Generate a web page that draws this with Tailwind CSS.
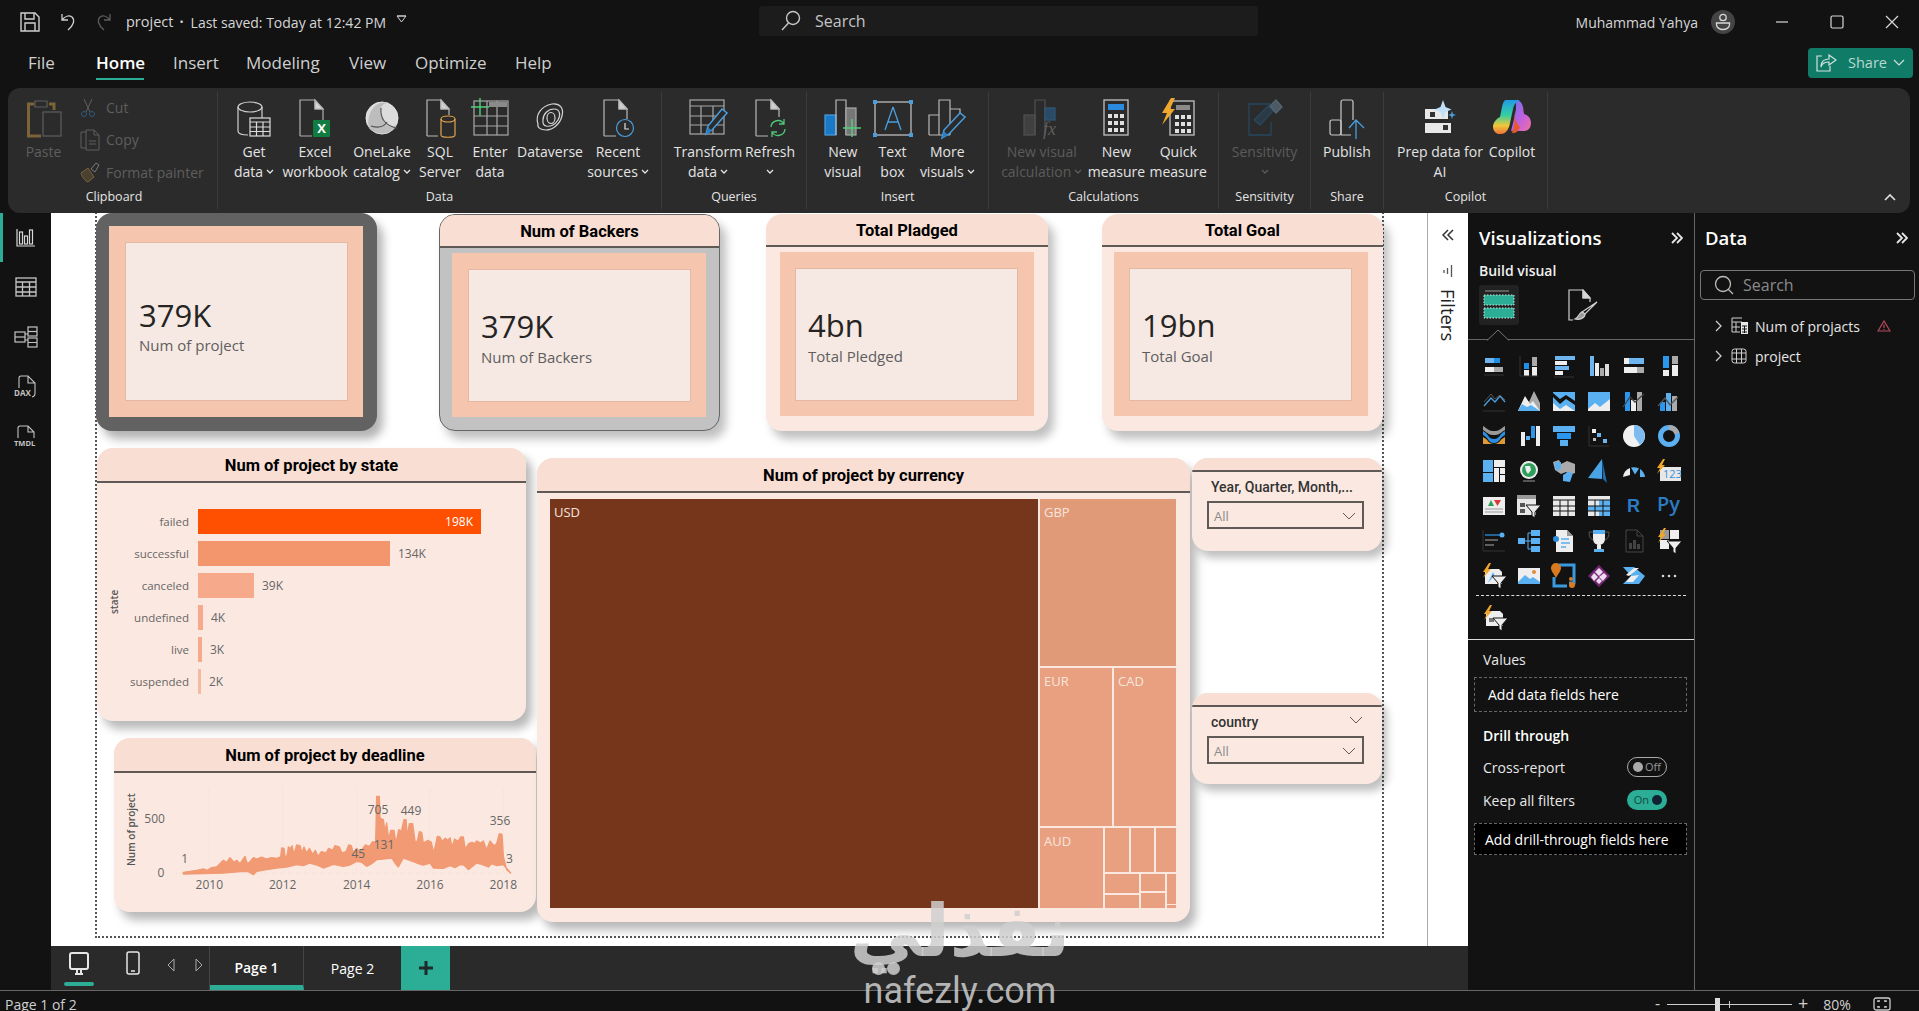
<!DOCTYPE html>
<html lang="en">
<head>
<meta charset="utf-8">
<title>project - Power BI</title>
<script src="https://cdn.jsdelivr.net/npm/@tailwindcss/browser@4"></script>
</head>
<body class="w-[1919px] h-[1011px] overflow-hidden flex flex-col bg-[#121212] text-[#e6e6e6] font-['Open_Sans',sans-serif] relative">

<!-- title bar -->
<div class="h-[44px] flex items-center shrink-0">
  <div class="w-[759px] flex items-center pl-[20px]">
    <svg width="20" height="20" viewBox="0 0 20 20" fill="none" stroke="#cfcfcf" stroke-width="1.4"><path d="M1 1h14l4 4v14H1zM5 1v6h9V1M5 19v-8h10v8"/></svg>
    <svg class="ml-[19px]" width="20" height="20" viewBox="0 0 20 20" fill="none" stroke="#cfcfcf" stroke-width="1.3"><path d="M3 2v6h6M3 8c3-4 7-5 10-3 3 3 2 8-4 13"/></svg>
    <svg class="ml-[14px]" width="20" height="20" viewBox="0 0 20 20" fill="none" stroke="#5c5c5c" stroke-width="1.3"><path d="M17 2v6h-6M17 8c-3-4-7-5-10-3-3 3-2 8 4 13"/></svg>
    <span class="ml-[13px] text-[14.5px] text-[#d6d6d6]">project</span>
    <span class="ml-[6px] text-[11px] text-[#d6d6d6]">•</span>
    <span class="ml-[7px] text-[14px] text-[#d6d6d6]">Last saved: Today at 12:42 PM</span>
    <svg class="ml-[10px] -mt-[6px]" width="11" height="8" viewBox="0 0 11 8" fill="none" stroke="#cfcfcf"><path d="M1 1h9L5.500 7zM1 1h9"/></svg>
  </div>
  <div class="w-[499px] h-[30px] bg-[#1c1c1c] rounded-[3px] flex items-center pl-[21px] -mt-[2px]">
    <svg width="22" height="22" viewBox="0 0 22 22" fill="none" stroke="#c8c8c8" stroke-width="1.4"><circle cx="13" cy="8" r="6.500"/><path d="M8.500 13 2 20"/></svg>
    <span class="ml-[13px] text-[16px] text-[#c4c4c4]">Search</span>
  </div>
  <div class="flex-1 flex items-center justify-end">
    <span class="text-[14px] text-[#d6d6d6]">Muhammad Yahya</span>
    <div class="ml-[13px] mr-[19px] w-[24px] h-[24px] rounded-full bg-[#444] flex items-center justify-center">
      <svg width="18" height="18" viewBox="0 0 18 18" fill="none" stroke="#d8d8d8" stroke-width="1.3"><circle cx="9" cy="4.500" r="3.200"/><path d="M2.500 10h13v1.500c0 3-3 5-6.500 5s-6.500-2-6.500-5z"/></svg>
    </div>
    <div class="w-[55px] flex justify-center"><svg width="14" height="14" viewBox="0 0 14 14" stroke="#d8d8d8" stroke-width="1.200"><path d="M1 7h12"/></svg></div>
    <div class="w-[55px] flex justify-center"><svg width="14" height="14" viewBox="0 0 14 14" fill="none" stroke="#d8d8d8" stroke-width="1.200"><rect x="1" y="1" width="12" height="12" rx="1.500"/></svg></div>
    <div class="w-[55px] flex justify-center"><svg width="14" height="14" viewBox="0 0 14 14" stroke="#d8d8d8" stroke-width="1.200"><path d="m1 1 12 12M13 1 1 13"/></svg></div>
  </div>
</div>

<!-- menu row -->
<div class="h-[44px] shrink-0 flex items-start relative text-[17px] text-[#cfcfcf] pl-[28px]">
  <span class="mt-[6px] w-[68px]">File</span>
  <span class="mt-[6px] w-[77px] font-semibold text-white">Home</span>
  <span class="mt-[6px] w-[73px]">Insert</span>
  <span class="mt-[6px] w-[103px]">Modeling</span>
  <span class="mt-[6px] w-[66px]">View</span>
  <span class="mt-[6px] w-[100px]">Optimize</span>
  <span class="mt-[6px]">Help</span>
  <div class="absolute left-[96px] top-[34px] w-[48px] h-[2px] bg-[#2bad96]"></div>
  <div class="absolute left-[1808px] top-[4px] w-[105px] h-[30px] rounded-[4px] bg-[#107c67] flex items-center pl-[8px] text-[14.5px] text-[#bcd8d2]">
    <svg width="21" height="20" viewBox="0 0 21 20" fill="none" stroke="#cfe2dd" stroke-width="1.200"><path d="M6 3H1v15h13v-5M13 2l7 5-7 5V9C9 9 6 10 5 14c0-6 4-8 8-8z"/></svg>
    <span class="ml-[11px]">Share</span>
    <svg class="ml-[6px]" width="12" height="8" viewBox="0 0 12 8" fill="none" stroke="#cfe2dd" stroke-width="1.200"><path d="m1 1 5 5 5-5"/></svg>
  </div>
</div>

<!-- ribbon -->
<div class="mx-[8px] w-[1902px] h-[125px] shrink-0 rounded-[12px] bg-[#2b2b2b] flex items-stretch py-[4px] pl-[1px] text-[14px] leading-[20px] text-[#e4e4e4] relative">

  <!-- Clipboard -->
  <div class="w-[209px] flex flex-col border-r border-[#3c3c3c]">
    <div class="flex-1 flex text-[#5e5e5e]">
      <div class="w-[71px] flex flex-col items-center pt-[6px]">
        <svg width="36" height="44" viewBox="0 0 36 44" fill="none" stroke-width="3"><path d="M7 6H1.500v32H14" stroke="#7d6436"/><path d="M22 6h5v6" stroke="#7d6436"/><path d="M8 3h12v6H8z" stroke="#5e5e5e" stroke-width="1.200"/><rect x="16" y="14" width="18" height="24" stroke="#5e5e5e" stroke-width="1.200"/></svg>
        <span class="-ml-[2px]">Paste</span>
      </div>
      <div class="flex flex-col gap-[12px] pt-[6px]">
        <div class="flex items-center h-[20px]"><svg width="16" height="20" viewBox="0 0 16 20" fill="none" stroke="#5e5e5e"><path d="m4 1 6 13M12 1 6 14"/><circle cx="4" cy="16" r="2.500" stroke="#2c5a7c"/><circle cx="12" cy="16" r="2.500" stroke="#2c5a7c"/></svg><span class="ml-[10px]">Cut</span></div>
        <div class="flex items-center h-[20px]"><svg width="20" height="22" viewBox="0 0 20 22" fill="none" stroke="#5e5e5e"><path d="M6 3H1v16h5M6 1h8l5 5v15H6zM14 1v5h5M9 12h7M9 15h7"/></svg><span class="ml-[6px]">Copy</span></div>
        <div class="flex items-center h-[20px] mt-[1px]"><svg width="20" height="22" viewBox="0 0 20 22" fill="none"><path d="m1 11 7-5 6 9-6 5c-3-1-6-5-7-9z" stroke="#7a6338" fill="#4a4030"/><path d="m11 7 5-6 3 2-4 7z" stroke="#7a7a7a"/></svg><span class="ml-[6px]">Format painter</span></div>
      </div>
    </div>
    <div class="text-center text-[12.5px] leading-[16px] pb-[4px] text-[#e4e4e4] pl-[2px]">Clipboard</div>
  </div>

  <!-- Data -->
  <div class="w-[444px] flex flex-col border-r border-[#3c3c3c]">
    <div class="flex-1 flex">
      <div class="w-[72px] flex flex-col items-center whitespace-nowrap pt-[6px]">
        <svg width="38" height="44" viewBox="0 0 38 44" fill="none" stroke="#cfcfcf" stroke-width="1.200"><ellipse cx="15" cy="9" rx="12" ry="5"/><path d="M3 9v24c0 3 5 4 10 4M27 9v11"/><rect x="15" y="20" width="20" height="18" stroke="#dcdcdc"/><path d="M15 24h20M15 29h20M15 33.500h20M21.500 24v14M28 24v14" stroke="#dcdcdc"/></svg>
        <span>Get</span><span class="flex items-center">data<svg class="ml-[3px]" width="8" height="6" viewBox="0 0 8 6" fill="none" stroke="#e4e4e4" stroke-width="1.300"><path d="m1 1 3 3 3-3"/></svg></span>
      </div>
      <div class="w-[50px] flex flex-col items-center whitespace-nowrap pt-[6px]">
        <svg width="36" height="44" viewBox="0 0 36 44" fill="none" stroke="#b0b0b0" stroke-width="1.200"><path d="M3 38V2h15l8 9v12M18 2v9h8M3 38h12"/><path d="M18 2v9h8z" fill="#d8d8d8"/><rect x="16" y="22" width="17" height="17" rx="1" fill="#107c41" stroke="none"/><text x="24.500" y="35" fill="#fff" text-anchor="middle" font-size="13" font-weight="700" stroke="none" font-family="Open Sans">X</text></svg>
        <span>Excel</span><span>workbook</span>
      </div>
      <div class="w-[84px] flex flex-col items-center whitespace-nowrap pt-[6px]">
        <svg width="38" height="44" viewBox="0 0 38 44" fill="none"><circle cx="19" cy="20" r="16" fill="#dcdcdc" stroke="#e8e8e8"/><path d="M6 30C14 38 28 38 34 26 28 32 22 28 18 18 16 12 18 6 24 5 12 2 3 16 6 30z" fill="#bdbdbd"/><path d="M18 10c-1 10 4 18 16 20M8 28c6 2 12 2 16-4" stroke="#555" stroke-width="1.200"/></svg>
        <span>OneLake</span><span class="flex items-center">catalog<svg class="ml-[3px]" width="8" height="6" viewBox="0 0 8 6" fill="none" stroke="#e4e4e4" stroke-width="1.300"><path d="m1 1 3 3 3-3"/></svg></span>
      </div>
      <div class="w-[32px] flex flex-col items-center whitespace-nowrap pt-[6px]">
        <svg width="36" height="44" viewBox="0 0 36 44" fill="none" stroke="#b8b8b8" stroke-width="1.200"><path d="M5 38V2h14l8 9v6M19 2v9h8M5 38h11"/><path d="M19 2v9h8z" fill="#cfcfcf"/><ellipse cx="26" cy="21" rx="7" ry="3" stroke="#e0a34c"/><path d="M19 21v16c0 3 14 3 14 0V21" stroke="#e0a34c"/></svg>
        <span>SQL</span><span>Server</span>
      </div>
      <div class="w-[68px] flex flex-col items-center whitespace-nowrap pt-[6px]">
        <svg width="38" height="44" viewBox="0 0 38 44" fill="none" stroke="#a8a8a8" stroke-width="1.200"><rect x="3" y="3" width="34" height="34"/><path d="M16 3v34M26 3v34M3 18h34M3 28h34"/><rect x="18" y="4" width="18" height="5" fill="#8a8a8a" stroke="none"/><path d="M9 0v18M0 9h18" stroke="#4fd07a" stroke-width="1.400"/></svg>
        <span>Enter</span><span>data</span>
      </div>
      <div class="w-[52px] flex flex-col items-center whitespace-nowrap pt-[6px]">
        <svg width="38" height="44" viewBox="0 0 38 44" fill="none" stroke="#d4d4d4" stroke-width="1.200"><path d="M7 26c-3-9 3-18 14-20 8-1 12 4 10 12-2 8-9 14-16 14-6 0-9-3-8-6z"/><path d="M12 22c0-6 5-11 11-11s7 6 4 11-8 7-12 6-3-4-3-6z"/><ellipse cx="20" cy="20" rx="4" ry="5.500"/></svg>
        <span>Dataverse</span>
      </div>
      <div class="w-[84px] flex flex-col items-center whitespace-nowrap pt-[6px]">
        <svg width="36" height="44" viewBox="0 0 36 44" fill="none" stroke="#b8b8b8" stroke-width="1.200"><path d="M4 38V2h15l8 9v10M19 2v9h8M4 38h12"/><path d="M19 2v9h8z" fill="#cfcfcf"/><circle cx="25" cy="30" r="8.500" stroke="#4a9ede"/><path d="M25 25v6h4" stroke="#e0e0e0"/></svg>
        <span>Recent</span><span class="flex items-center">sources<svg class="ml-[3px]" width="8" height="6" viewBox="0 0 8 6" fill="none" stroke="#e4e4e4" stroke-width="1.300"><path d="m1 1 3 3 3-3"/></svg></span>
      </div>
    </div>
    <div class="text-center text-[12.5px] leading-[16px] pb-[4px]">Data</div>
  </div>

  <!-- Queries -->
  <div class="w-[145px] flex flex-col border-r border-[#3c3c3c]">
    <div class="flex-1 flex">
      <div class="w-[92px] flex flex-col items-center whitespace-nowrap pt-[6px]">
        <svg width="40" height="44" viewBox="0 0 40 44" fill="none" stroke="#a8a8a8" stroke-width="1.200"><rect x="2" y="2" width="34" height="34"/><path d="M2 8h34M2 18h34M2 27h34M13 8v28M25 8v28"/><path d="m22 38 2-8 14-17 5 4-15 17z" transform="translate(-4 -2)" fill="#2b2b2b" stroke="#4a9ede" stroke-width="1.500"/><path d="m18 36 2-7 4 4z" fill="#2a7fc4" stroke="none"/></svg>
        <span>Transform</span><span class="flex items-center">data<svg class="ml-[3px]" width="8" height="6" viewBox="0 0 8 6" fill="none" stroke="#e4e4e4" stroke-width="1.300"><path d="m1 1 3 3 3-3"/></svg></span>
      </div>
      <div class="w-[32px] flex flex-col items-center whitespace-nowrap pt-[6px]">
        <svg width="36" height="44" viewBox="0 0 36 44" fill="none" stroke="#b8b8b8" stroke-width="1.200"><path d="M4 38V2h15l8 9v8M19 2v9h8M4 38h12"/><path d="M19 2v9h8z" fill="#cfcfcf"/><path d="M19 29a7 7 0 0 1 13-3M33 31a7 7 0 0 1-13 3M32 21v5h-5M20 39v-5h5" stroke="#4fc878" stroke-width="1.300"/></svg>
        <span>Refresh</span><svg class="mt-[7px]" width="8" height="6" viewBox="0 0 8 6" fill="none" stroke="#e4e4e4" stroke-width="1.300"><path d="m1 1 3 3 3-3"/></svg>
      </div>
    </div>
    <div class="text-center text-[12.5px] leading-[16px] pb-[4px]">Queries</div>
  </div>

  <!-- Insert -->
  <div class="w-[182px] flex flex-col border-r border-[#3c3c3c]">
    <div class="flex-1 flex">
      <div class="w-[72px] flex flex-col items-center whitespace-nowrap pt-[6px]">
        <svg width="38" height="44" viewBox="0 0 38 44" fill="none" stroke="#b8b8b8" stroke-width="1.200"><rect x="1" y="17" width="11" height="20" fill="#1a78c8" stroke="#4a9ede"/><path d="M12 37V2h10v35"/><rect x="22" y="10" width="10" height="27" fill="#777" stroke="#a8a8a8"/><path d="M28 21v18M19 30h18" stroke="#4fd07a" stroke-width="1.400"/></svg>
        <span>New</span><span>visual</span>
      </div>
      <div class="w-[28px] flex flex-col items-center whitespace-nowrap pt-[6px]">
        <svg width="40" height="44" viewBox="0 0 40 44" fill="none"><rect x="2" y="4" width="36" height="33" stroke="#c8c8c8" stroke-width="1.200"/><path d="m20 9-8 23M20 9l8 23M15 24h10" stroke="#4a9ede" stroke-width="1.300"/><g fill="#4a9ede"><rect x="0" y="2" width="4" height="4"/><rect x="36" y="2" width="4" height="4"/><rect x="0" y="35" width="4" height="4"/><rect x="36" y="35" width="4" height="4"/></g></svg>
        <span>Text</span><span>box</span>
      </div>
      <div class="w-[82px] flex flex-col items-center whitespace-nowrap pt-[6px]">
        <svg width="38" height="44" viewBox="0 0 38 44" fill="none" stroke="#b8b8b8" stroke-width="1.200"><path d="M1 37V17h10M11 37V2h11v35M22 11h10v8M1 37h21"/><path d="m14 40 2-8 16-17 5 4-16 17z" fill="#2b2b2b" stroke="#4a9ede" stroke-width="1.500"/><path d="m14 40 2-7 4 4z" fill="#2a7fc4" stroke="none"/></svg>
        <span>More</span><span class="flex items-center">visuals<svg class="ml-[3px]" width="8" height="6" viewBox="0 0 8 6" fill="none" stroke="#e4e4e4" stroke-width="1.300"><path d="m1 1 3 3 3-3"/></svg></span>
      </div>
    </div>
    <div class="text-center text-[12.5px] leading-[16px] pb-[4px]">Insert</div>
  </div>

  <!-- Calculations -->
  <div class="w-[230px] flex flex-col border-r border-[#3c3c3c]">
    <div class="flex-1 flex">
      <div class="w-[106px] flex flex-col items-center whitespace-nowrap pt-[6px] text-[#5c5c5c]">
        <svg width="38" height="44" viewBox="0 0 38 44" fill="none" stroke="#505050" stroke-width="1.200"><rect x="1" y="17" width="11" height="20" fill="#404040"/><path d="M12 37V2h10v35"/><rect x="22" y="10" width="10" height="12" fill="#2a4a66" stroke="#2f5878"/><text x="20" y="37" fill="#5e5e5e" stroke="none" font-size="18" font-style="italic" font-family="Liberation Serif">fx</text></svg>
        <span>New visual</span><span class="flex items-center">calculation<svg class="ml-[3px]" width="8" height="6" viewBox="0 0 8 6" fill="none" stroke="#5c5c5c" stroke-width="1.300"><path d="m1 1 3 3 3-3"/></svg></span>
      </div>
      <div class="w-[44px] flex flex-col items-center whitespace-nowrap pt-[6px]">
        <svg width="28" height="44" viewBox="0 0 28 44" fill="none" stroke="#b8b8b8" stroke-width="1.400"><rect x="2" y="2" width="24" height="35"/><rect x="6" y="6" width="16" height="6" fill="#2a8ae0" stroke="none"/><g fill="#e0e0e0" stroke="none"><rect x="6" y="16" width="4" height="4"/><rect x="12" y="16" width="4" height="4"/><rect x="18" y="16" width="4" height="4"/><rect x="6" y="23" width="4" height="4"/><rect x="12" y="23" width="4" height="4"/><rect x="18" y="23" width="4" height="4"/><rect x="6" y="30" width="4" height="4"/><rect x="12" y="30" width="4" height="4"/><rect x="18" y="30" width="4" height="4"/></g></svg>
        <span>New</span><span>measure</span>
      </div>
      <div class="w-[80px] flex flex-col items-center whitespace-nowrap pt-[6px]">
        <svg width="34" height="44" viewBox="0 0 34 44" fill="none" stroke="#b8b8b8" stroke-width="1.400"><rect x="9" y="3" width="24" height="34"/><rect x="15" y="7" width="14" height="5" fill="#8a8a8a" stroke="none"/><g fill="#e0e0e0" stroke="none"><rect x="14" y="17" width="4" height="4"/><rect x="20" y="17" width="4" height="4"/><rect x="26" y="17" width="4" height="4"/><rect x="14" y="24" width="4" height="4"/><rect x="20" y="24" width="4" height="4"/><rect x="26" y="24" width="4" height="4"/><rect x="14" y="31" width="4" height="4"/><rect x="20" y="31" width="4" height="4"/><rect x="26" y="31" width="4" height="4"/></g><path d="M10 0 1 15h5L1 27l13-16H9l5-11z" fill="#f0a82c" stroke="none"/></svg>
        <span>Quick</span><span>measure</span>
      </div>
    </div>
    <div class="text-center text-[12.5px] leading-[16px] pb-[4px]">Calculations</div>
  </div>

  <!-- Sensitivity -->
  <div class="w-[92px] flex flex-col border-r border-[#3c3c3c]">
    <div class="flex-1 flex flex-col items-center pt-[6px] text-[#5c5c5c] whitespace-nowrap">
      <svg width="38" height="44" viewBox="0 0 38 44" fill="none" stroke="#27485f" stroke-width="1.300"><path d="M24 6H3v31h22V24"/><path d="m8 22 14-14 5 5-13 14z" fill="#2b3a44"/><path d="m24 8 6-6 6 7-6 6z" fill="#4a5964" stroke="#566670"/></svg>
      <span>Sensitivity</span><svg class="mt-[7px]" width="8" height="6" viewBox="0 0 8 6" fill="none" stroke="#5c5c5c" stroke-width="1.300"><path d="m1 1 3 3 3-3"/></svg>
    </div>
    <div class="text-center text-[12.5px] leading-[16px] pb-[4px]">Sensitivity</div>
  </div>

  <!-- Share -->
  <div class="w-[73px] flex flex-col border-r border-[#3c3c3c]">
    <div class="flex-1 flex flex-col items-center pt-[6px]">
      <svg width="36" height="44" viewBox="0 0 36 44" fill="none" stroke="#c8c8c8" stroke-width="1.200"><rect x="1" y="22" width="11" height="15" rx="2"/><path d="M12 37V4a2 2 0 0 1 2-2h8a2 2 0 0 1 2 2v18M12 37h10"/><path d="M27 41V23M20 30l7-8 8 8" stroke="#4a9ede" stroke-width="1.300"/></svg>
      <span>Publish</span>
    </div>
    <div class="text-center text-[12.5px] leading-[16px] pb-[4px]">Share</div>
  </div>

  <!-- Copilot -->
  <div class="w-[164px] flex flex-col border-r border-[#3c3c3c]">
    <div class="flex-1 flex">
      <div class="w-[112px] flex flex-col items-center whitespace-nowrap pt-[6px]">
        <svg width="34" height="44" viewBox="0 0 34 44" fill="none"><rect x="2" y="11" width="23" height="10" fill="#e8e8e8"/><rect x="7" y="14" width="5" height="5" fill="#333"/><rect x="2" y="25" width="26" height="10" fill="#e8e8e8"/><rect x="20" y="27" width="5" height="5" fill="#333"/><path d="M20 3l2.500 7 6 2.500-6 2.500-2.500 7-2.500-7-6-2.500 6-2.500z" fill="#bfe0f8" transform="translate(0 -1)"/><path d="m29 13 1 3 3 1-3 1-1 3-1-3-3-1 3-1z" fill="#4a9ede"/></svg>
        <span>Prep data for</span><span>AI</span>
      </div>
      <div class="w-[32px] flex flex-col items-center whitespace-nowrap pt-[6px]">
        <svg width="40" height="44" viewBox="0 0 40 44" fill="none"><defs><linearGradient id="cpa" x1="0" y1="0" x2="0" y2="1"><stop offset="0" stop-color="#1f9be8"/><stop offset=".45" stop-color="#35cfa0"/><stop offset=".75" stop-color="#f0c838"/><stop offset="1" stop-color="#f0703a"/></linearGradient><linearGradient id="cpb" x1="0" y1="0" x2="1" y2="1"><stop offset="0" stop-color="#5f78f0"/><stop offset=".55" stop-color="#c060e0"/><stop offset="1" stop-color="#f070a0"/></linearGradient></defs><path d="M24 2c4 0 6 3 7 7l1 7c4 1 7 4 7 9 0 5-3 8-7 8H19l3-12 2-10c0-4 0-7 0-9z" fill="url(#cpb)"/><path d="M14 2h14c-3 1-6 4-7 9l-3 14c-1 6-4 11-9 11H6c-3-1-5-4-5-7 0-4 3-8 7-10l2-10c1-4 2-7 4-7z" fill="url(#cpa)"/><path d="M22 14c1 8 1 14-2 21 5 0 6-2 8-6-4-4-5-9-6-15z" fill="#e8582a"/></svg>
        <span>Copilot</span>
      </div>
    </div>
    <div class="text-center text-[12.5px] leading-[16px] pb-[4px]">Copilot</div>
  </div>

  <svg class="absolute right-[14px] bottom-[12px]" width="12" height="8" viewBox="0 0 12 8" fill="none" stroke="#e0e0e0" stroke-width="1.600"><path d="m1 7 5-5 5 5"/></svg>
</div>

<!-- main -->
<div class="flex-1 flex min-h-0">

  <!-- left rail -->
  <div class="w-[51px] shrink-0 flex flex-col relative">
    <div class="absolute left-0 top-0 w-[3px] h-[49px] bg-[#2bad96]"></div>
    <div class="h-[49px] flex items-center justify-center"><svg width="20" height="20" viewBox="0 0 20 20" fill="none" stroke="#d8d8d8" stroke-width="1.200"><path d="M1 1v17h18"/><rect x="3.500" y="4" width="3" height="12"/><rect x="8.500" y="8" width="3" height="8"/><rect x="13.500" y="2" width="3" height="14"/></svg></div>
    <div class="h-[50px] flex items-center justify-center"><svg width="22" height="20" viewBox="0 0 22 20" fill="none" stroke="#c4c4c4" stroke-width="1.300"><rect x="1" y="1" width="20" height="18"/><path d="M1 5h20M1 10h20M1 15h20M7.500 5v14M14.500 5v14"/></svg></div>
    <div class="h-[50px] flex items-center justify-center"><svg width="24" height="22" viewBox="0 0 24 22" fill="none" stroke="#c4c4c4" stroke-width="1.200"><rect x="1" y="6" width="10" height="10"/><path d="M1 11h10"/><rect x="14" y="1" width="9" height="9"/><path d="M14 5.500h9"/><rect x="14" y="12" width="9" height="9"/><path d="M14 16.500h9M11 8h3M11 14h3"/></svg></div>
    <div class="h-[50px] flex items-center justify-center"><svg width="24" height="24" viewBox="0 0 24 24" fill="none" stroke="#c4c4c4" stroke-width="1.100"><path d="M5 13V3a2 2 0 0 1 2-2h7l7 7v10M14 1v7h7M21 18a4 4 0 0 1-3 4"/><text x="0" y="21" fill="#c4c4c4" stroke="none" font-size="8" font-weight="700" font-family="Open Sans">DAX</text></svg></div>
    <div class="h-[50px] flex items-center justify-center"><svg width="24" height="24" viewBox="0 0 24 24" fill="none" stroke="#c4c4c4" stroke-width="1.100"><path d="M4 13V3a2 2 0 0 1 2-2h8l6 6v6M14 1v6h6"/><text x="0" y="21" fill="#c4c4c4" stroke="none" font-size="7.500" font-weight="700" font-family="Open Sans">TMDL</text></svg></div>
  </div>

  <div class="w-[1417px] shrink-0 flex flex-col">
    <div class="flex-1 flex min-h-0">
      <!-- canvas -->
      <div class="w-[1376px] bg-white relative overflow-hidden">
        <div class="absolute left-[44px] top-[-4px] w-[1289px] h-[729px] border-2 border-dotted border-[#555]"></div>

        <!-- card 1 -->
        <div class="absolute left-[45px] top-0 w-[281px] h-[218px] rounded-[16px] bg-[#636262] shadow-[6px_8px_10px_rgba(0,0,0,0.3)] pt-[13px] pl-[13px]">
          <div class="w-[254px] h-[191px] bg-[#f5c5ae] pt-[16px] pl-[16px]">
            <div class="w-[223px] h-[159px] bg-[#f6e9e4] border border-[#e4b8a4] flex flex-col justify-center pl-[13px] pt-[7px]">
              <div class="text-[31px] leading-[38px] text-[#252423]">379K</div>
              <div class="text-[15px] leading-[20px] mt-[1px] text-[#605e5c]">Num of project</div>
            </div>
          </div>
        </div>
        <!-- card 2 -->
        <div class="absolute left-[388px] top-[1px] w-[281px] h-[217px] rounded-[16px] bg-[#c2c2c2] border border-[#666] shadow-[6px_8px_10px_rgba(0,0,0,0.25)] overflow-hidden">
          <div class="h-[33px] bg-[#f9ded3] border-b-2 border-[#5f5a55] text-center font-['Roboto',sans-serif] font-bold text-[16.5px] leading-[33px] text-black">Num of Backers</div>
          <div class="ml-[12px] mt-[5px] w-[254px] h-[164px] bg-[#f5c5ae] pt-[16px] pl-[16px]">
            <div class="w-[223px] h-[133px] bg-[#f6e9e4] border border-[#e4b8a4] flex flex-col justify-center pl-[12px] pt-[3px]">
              <div class="text-[31px] leading-[38px] text-[#252423]">379K</div>
              <div class="text-[15px] leading-[20px] mt-[2px] text-[#605e5c]">Num of Backers</div>
            </div>
          </div>
        </div>
        <!-- card 3 -->
        <div class="absolute left-[715px] top-[1px] w-[282px] h-[217px] rounded-[16px] bg-[#fbe9e1] shadow-[6px_8px_10px_rgba(0,0,0,0.25)] overflow-hidden">
          <div class="h-[33px] bg-[#f9ded3] border-b-2 border-[#5f5a55] text-center font-['Roboto',sans-serif] font-bold text-[16.5px] leading-[33px] text-black">Total Pladged</div>
          <div class="ml-[14px] mt-[5px] w-[254px] h-[164px] bg-[#f5c5ae] pt-[16px] pl-[15px]">
            <div class="w-[223px] h-[133px] bg-[#f6e9e4] border border-[#e4b8a4] flex flex-col justify-center pl-[12px] pt-[3px]">
              <div class="text-[31px] leading-[38px] text-[#252423]">4bn</div>
              <div class="text-[15px] leading-[20px] mt-[2px] text-[#605e5c]">Total Pledged</div>
            </div>
          </div>
        </div>
        <!-- card 4 -->
        <div class="absolute left-[1051px] top-[1px] w-[281px] h-[217px] rounded-[16px] bg-[#fbe9e1] shadow-[6px_8px_10px_rgba(0,0,0,0.25)] overflow-hidden">
          <div class="h-[33px] bg-[#f9ded3] border-b-2 border-[#5f5a55] text-center font-['Roboto',sans-serif] font-bold text-[16.5px] leading-[33px] text-black">Total Goal</div>
          <div class="ml-[12px] mt-[5px] w-[254px] h-[164px] bg-[#f5c5ae] pt-[16px] pl-[15px]">
            <div class="w-[223px] h-[133px] bg-[#f6e9e4] border border-[#e4b8a4] flex flex-col justify-center pl-[12px] pt-[3px]">
              <div class="text-[31px] leading-[38px] text-[#252423]">19bn</div>
              <div class="text-[15px] leading-[20px] mt-[2px] text-[#605e5c]">Total Goal</div>
            </div>
          </div>
        </div>

        <!-- state chart -->
        <div class="absolute left-[46px] top-[235px] w-[429px] h-[273px] rounded-[16px] bg-[#fbe9e1] shadow-[6px_8px_10px_rgba(0,0,0,0.28)] overflow-hidden">
          <div class="h-[35px] bg-[#f9ded3] border-b-2 border-[#5f5a55] text-center font-['Roboto',sans-serif] font-bold text-[16.5px] leading-[36px] text-black">Num of project by state</div>
          <div class="pt-[26px] flex flex-col gap-[7px] text-[12px] text-[#666]">
            <div class="flex items-center h-[25px]"><span class="w-[92px] text-right text-[11.5px]">failed</span><div class="ml-[9px] w-[283px] h-full bg-[#ff4f00] flex items-center justify-end pr-[8px] text-white">198K</div></div>
            <div class="flex items-center h-[25px]"><span class="w-[92px] text-right text-[11.5px]">successful</span><div class="ml-[9px] w-[192px] h-full bg-[#f4966d]"></div><span class="ml-[8px]">134K</span></div>
            <div class="flex items-center h-[25px]"><span class="w-[92px] text-right text-[11.5px]">canceled</span><div class="ml-[9px] w-[56px] h-full bg-[#f7aa8b]"></div><span class="ml-[8px]">39K</span></div>
            <div class="flex items-center h-[25px]"><span class="w-[92px] text-right text-[11.5px]">undefined</span><div class="ml-[9px] w-[5px] h-full bg-[#f7aa8b]"></div><span class="ml-[8px]">4K</span></div>
            <div class="flex items-center h-[25px]"><span class="w-[92px] text-right text-[11.5px]">live</span><div class="ml-[9px] w-[4px] h-full bg-[#f7aa8b]"></div><span class="ml-[8px]">3K</span></div>
            <div class="flex items-center h-[25px]"><span class="w-[92px] text-right text-[11.5px]">suspended</span><div class="ml-[9px] w-[3px] h-full bg-[#f7b9a0]"></div><span class="ml-[8px]">2K</span></div>
          </div>
          <div class="absolute left-[10px] top-[142px] w-[14px] h-[24px] [writing-mode:vertical-rl] rotate-180 text-[10px] leading-[14px] font-semibold text-[#555] flex items-center justify-center">state</div>
        </div>

        <!-- deadline chart -->
        <div class="absolute left-[63px] top-[525px] w-[422px] h-[174px] rounded-[16px] bg-[#fbe9e1] shadow-[6px_8px_10px_rgba(0,0,0,0.28)] overflow-hidden">
          <div class="h-[35px] bg-[#f9ded3] border-b-2 border-[#5f5a55] text-center font-['Roboto',sans-serif] font-bold text-[16.5px] leading-[36px] text-black">Num of project by deadline</div>
          <svg class="absolute left-0 top-0" width="422" height="174" viewBox="72 895 1266 522" font-family="Open Sans" font-size="36" fill="#666">
            <g stroke="#d8cfca" stroke-width="2" stroke-dasharray="2 6"><path d="M358 1045v255M578 1045v255M800 1045v255M1020 1045v255M1240 1045v255M250 1300h1010"/></g>
            <path fill="#f19a73" stroke="#f19a73" stroke-width="4" stroke-linejoin="round" d="M280 1298 320 1292 340 1288 352 1292 365 1284 380 1282 392 1270 400 1262 410 1268 420 1254 432 1268 440 1262 450 1272 465 1250 472 1272 480 1266 490 1254 500 1258 515 1252 530 1258 545 1254 560 1256 572 1252 575 1225 582 1226 586 1256 592 1245 595 1222 603 1226 606 1218 612 1244 620 1216 630 1218 636 1240 642 1222 650 1240 658 1226 668 1244 676 1232 684 1250 694 1236 708 1240 716 1226 728 1232 735 1218 748 1222 756 1240 768 1236 776 1216 784 1218 790 1240 800 1226 810 1238 826 1216 838 1220 848 1206 857 1208 860 1070 868 1070 870 1135 880 1140 885 1175 890 1150 896 1200 902 1172 912 1172 918 1212 926 1170 934 1175 942 1140 948 1140 952 1190 958 1152 968 1152 975 1205 982 1205 988 1176 995 1178 1000 1210 1014 1202 1024 1208 1030 1238 1036 1220 1042 1190 1050 1192 1056 1205 1066 1196 1074 1202 1080 1194 1086 1222 1094 1198 1104 1205 1112 1192 1120 1192 1126 1228 1136 1212 1146 1208 1154 1212 1160 1204 1172 1210 1180 1204 1190 1230 1200 1204 1212 1218 1220 1212 1228 1182 1236 1184 1240 1250 1250 1290 1262 1300 1240 1275 1220 1278 1205 1272 1195 1282 1175 1274 1160 1270 1145 1282 1135 1290 1122 1276 1110 1275 1095 1284 1080 1278 1060 1286 1030 1285 1020 1270 1000 1276 980 1270 960 1262 940 1255 925 1282 915 1270 905 1255 880 1258 860 1260 845 1272 830 1280 815 1268 800 1265 780 1276 760 1280 730 1274 700 1285 680 1276 660 1270 640 1278 620 1275 590 1282 560 1285 530 1290 500 1295 490 1305 475 1296 460 1295 400 1300 280 1303Z"/>
            <text x="194" y="1151" text-anchor="middle">500</text>
            <text x="213" y="1313" text-anchor="middle">0</text>
            <text x="284" y="1271" text-anchor="middle">1</text>
            <text x="864" y="1124" text-anchor="middle">705</text>
            <text x="963" y="1127" text-anchor="middle">449</text>
            <text x="1230" y="1157" text-anchor="middle">356</text>
            <text x="1258" y="1271" text-anchor="middle">3</text>
            <text x="805" y="1256" text-anchor="middle">45</text>
            <text x="882" y="1229" text-anchor="middle">131</text>
            <text x="358" y="1349" text-anchor="middle">2010</text>
            <text x="578" y="1349" text-anchor="middle">2012</text>
            <text x="800" y="1349" text-anchor="middle">2014</text>
            <text x="1020" y="1349" text-anchor="middle">2016</text>
            <text x="1240" y="1349" text-anchor="middle">2018</text>
            <text x="0" y="0" text-anchor="middle" font-size="30" font-weight="600" fill="#555" transform="translate(134 1170) rotate(-90)">Num of project</text>
          </svg>
        </div>

        <!-- currency treemap -->
        <div class="absolute left-[486px] top-[245px] w-[653px] h-[464px] rounded-[16px] bg-[#fbe9e1] shadow-[6px_8px_10px_rgba(0,0,0,0.28)] overflow-hidden">
          <div class="h-[35px] bg-[#f9ded3] border-b-2 border-[#5f5a55] text-center font-['Roboto',sans-serif] font-bold text-[16.5px] leading-[36px] text-black">Num of project by currency</div>
          <div class="ml-[13px] mt-[6px] w-[626px] h-[409px] flex gap-[2px] text-[13px] text-[#f7e5dc] bg-[#fbe9e1]">
            <div class="w-[488px] bg-[#76361c] pl-[4px] pt-[4px]">USD</div>
            <div class="w-[136px] flex flex-col gap-[2px]">
              <div class="h-[167px] bg-[#e09a78] pl-[4px] pt-[4px]">GBP</div>
              <div class="h-[158px] flex gap-[2px]">
                <div class="w-[72px] bg-[#e8a080] pl-[4px] pt-[4px]">EUR</div>
                <div class="w-[62px] bg-[#e8a080] pl-[4px] pt-[4px]">CAD</div>
              </div>
              <div class="h-[80px] flex gap-[2px]">
                <div class="w-[63px] bg-[#e8a080] pl-[4px] pt-[4px]">AUD</div>
                <div class="w-[71px] flex flex-col gap-[2px]">
                  <div class="h-[44px] flex gap-[2px]">
                    <div class="w-[24px] bg-[#e8a080]"></div><div class="w-[23px] bg-[#e8a080]"></div><div class="w-[20px] bg-[#e8a080]"></div>
                  </div>
                  <div class="h-[34px] flex gap-[2px]">
                    <div class="w-[34px] flex flex-col gap-[2px]"><div class="h-[19px] bg-[#e8a080]"></div><div class="h-[13px] bg-[#e8a080]"></div></div>
                    <div class="w-[24px] flex flex-col gap-[2px]"><div class="h-[17px] bg-[#e8a080]"></div><div class="h-[15px] bg-[#e8a080]"></div></div>
                    <div class="w-[9px] flex flex-col gap-[1px]"><div class="h-[30px] bg-[#e8a080]"></div><div class="h-[3px] bg-[#e8a080]"></div></div>
                  </div>
                </div>
              </div>
            </div>
          </div>
        </div>

        <!-- slicer 1 -->
        <div class="absolute left-[1141px] top-[245px] w-[190px] h-[93px] rounded-[16px] bg-[#fbe9e1] shadow-[5px_7px_8px_rgba(0,0,0,0.25)] overflow-hidden">
          <div class="h-[14px] bg-[#f9ded3] border-b-2 border-[#5f5a55]"></div>
          <div class="pl-[19px] pt-[6px] text-[14px] leading-[18px] font-['Roboto',sans-serif] font-medium text-[#333] whitespace-nowrap">Year, Quarter, Month,...</div>
          <div class="ml-[15px] mt-[5px] w-[157px] h-[28px] border-2 border-[#5f5a55] flex items-center justify-between pl-[5px] pr-[6px] pt-[3px] text-[13px] text-[#8a8a8a]">All<svg width="14" height="9" viewBox="0 0 14 9" fill="none" stroke="#5f5a55"><path d="m1 1 6 6 6-6"/></svg></div>
        </div>
        <!-- slicer 2 -->
        <div class="absolute left-[1141px] top-[480px] w-[190px] h-[91px] rounded-[16px] bg-[#fbe9e1] shadow-[5px_7px_8px_rgba(0,0,0,0.25)] overflow-hidden">
          <div class="h-[14px] bg-[#f9ded3] border-b-2 border-[#5f5a55]"></div>
          <div class="pl-[19px] pr-[19px] pt-[6px] flex items-center justify-between text-[14px] leading-[18px] font-['Roboto',sans-serif] font-medium text-[#333]">country<svg class="-mt-[4px]" width="14" height="9" viewBox="0 0 14 9" fill="none" stroke="#5f5a55"><path d="m1 1 6 6 6-6"/></svg></div>
          <div class="ml-[15px] mt-[5px] w-[157px] h-[28px] border-2 border-[#5f5a55] flex items-center justify-between pl-[5px] pr-[6px] pt-[3px] text-[13px] text-[#8a8a8a]">All<svg width="14" height="9" viewBox="0 0 14 9" fill="none" stroke="#5f5a55"><path d="m1 1 6 6 6-6"/></svg></div>
        </div>
      </div>

      <!-- filters -->
      <div class="w-[41px] bg-white border-l border-[#aaa] flex flex-col items-center text-[#333]">
        <svg class="mt-[16px]" width="12" height="12" viewBox="0 0 12 12" fill="none" stroke="#333" stroke-width="1.500"><path d="M6 1 1 6l5 5M11 1 6 6l5 5"/></svg>
        <svg class="mt-[24px]" width="10" height="12" viewBox="0 0 10 12" stroke="#555" stroke-width="1.300"><path d="M1 5v3M4.500 3v6M8.500 0v12"/></svg>
        <span class="mt-[12px] [writing-mode:vertical-rl] text-[18.5px] leading-[20px] text-[#222]">Filters</span>
      </div>
    </div>

    <!-- tabs -->
    <div class="h-[44px] shrink-0 bg-[#2a2a2a] flex items-stretch text-[14px] text-white relative">
      <div class="w-[159px] flex items-center relative border-r border-[#444]">
        <svg class="absolute left-[18px] top-[6px]" width="20" height="24" viewBox="0 0 20 24" fill="none" stroke="#e6e6e6" stroke-width="2"><rect x="1" y="1" width="18" height="16" rx="2"/><path d="M6 22h8M8 18v3M12 18v3"/></svg>
        <div class="absolute left-[13px] top-[36px] w-[30px] h-[4px] rounded-full bg-[#2bad96]"></div>
        <svg class="absolute left-[75px] top-[5px]" width="14" height="24" viewBox="0 0 14 24" fill="none" stroke="#e6e6e6" stroke-width="1.500"><rect x="1" y="1" width="12" height="22" rx="2"/><path d="M5 20h4"/></svg>
        <svg class="absolute left-[116px] top-[12px]" width="8" height="14" viewBox="0 0 8 14" fill="none" stroke="#aaa"><path d="M7 1 1 7l6 6z"/></svg>
        <svg class="absolute left-[144px] top-[12px]" width="8" height="14" viewBox="0 0 8 14" fill="none" stroke="#aaa"><path d="m1 1 6 6-6 6z"/></svg>
      </div>
      <div class="w-[94px] border-r border-[#444] border-b-[5px] border-b-[#2bad96] flex items-center justify-center font-semibold pt-[3px]">Page 1</div>
      <div class="w-[97px] flex items-center justify-center">Page 2</div>
      <div class="w-[49px] bg-[#2bad96] flex items-center justify-center">
        <svg width="14" height="14" viewBox="0 0 14 14" stroke="#1f2a2a" stroke-width="3"><path d="M7 0v14M0 7h14"/></svg>
      </div>
    </div>
  </div>

  <!-- visualizations pane -->
  <div class="w-[227px] shrink-0 border-r border-[#666] flex flex-col">
    <div class="h-[50px] shrink-0 flex items-center justify-between pl-[11px] pr-[11px]">
      <span class="text-[18.5px] font-semibold text-white">Visualizations</span>
      <svg width="12" height="12" viewBox="0 0 12 12" fill="none" stroke="#e6e6e6" stroke-width="1.800"><path d="m1 1 5 5-5 5M6 1l5 5-5 5"/></svg>
    </div>
    <div class="h-[16px] shrink-0 pl-[11px] text-[14px] leading-[16px] font-semibold text-[#f0f0f0]">Build visual</div>
    <div class="h-[61px] shrink-0 relative border-b border-[#666]">
      <div class="absolute left-[11px] top-[6px] w-[40px] h-[40px] rounded-[3px] bg-[#222] flex items-center justify-center">
        <svg width="32" height="32" viewBox="0 0 32 32"><path d="M2 2h24" stroke="#999"/><rect x="1" y="6" width="30" height="10" fill="#2bad96" stroke="#cfe8e0" stroke-dasharray="1.500 1.500"/><rect x="1" y="19" width="30" height="10" fill="#2bad96" stroke="#cfe8e0" stroke-dasharray="1.500 1.500"/></svg>
      </div>
      <svg class="absolute left-[99px] top-[10px]" width="32" height="32" viewBox="0 0 32 32" fill="none" stroke="#d0d0d0" stroke-width="1.200"><path d="M6 31H2V1h14l7 8v4M16 1v8h7"/><path d="M16 1v8h7z" fill="#d8d8d8"/><path d="M30 13 18 25l-3-2z"/><path d="M15 23c-3 1-3 5-7 7 5 1 10-1 10-5z" fill="#9a9a9a"/></svg>
      <svg class="absolute left-[19px] top-[50px]" width="22" height="12" viewBox="0 0 22 12" fill="#121212" stroke="#777"><path d="M0 11.500 11 1l11 10.500"/></svg>
    </div>
    <!-- visual gallery -->
    <div class="shrink-0 pt-[8px] pl-[8px] h-[255px] grid grid-cols-[repeat(6,35px)] auto-rows-[35px] place-items-center">
      <!-- r1 -->
      <svg width="24" height="24" viewBox="0 0 24 24"><rect x="3" y="4" width="9" height="5" fill="#6eb5f0"/><rect x="12" y="4" width="6" height="5" fill="#1e8fe6"/><rect x="3" y="13" width="9" height="5" fill="#eee"/><rect x="12" y="13" width="9" height="5" fill="#aaa"/><path d="M2 21h20" stroke="#333"/></svg>
      <svg width="24" height="24" viewBox="0 0 24 24"><rect x="7" y="9" width="5" height="6" fill="#1e8fe6"/><rect x="7" y="16" width="5" height="6" fill="#eee"/><rect x="15" y="3" width="5" height="9" fill="#aaa"/><rect x="15" y="13" width="5" height="9" fill="#eee"/><path d="M3 2v20h18" fill="none" stroke="#333"/></svg>
      <svg width="24" height="24" viewBox="0 0 24 24"><rect x="3" y="2" width="20" height="4" fill="#6eb5f0"/><rect x="3" y="7" width="12" height="4" fill="#eee"/><rect x="3" y="12" width="14" height="4" fill="#6eb5f0"/><rect x="3" y="17" width="8" height="4" fill="#eee"/><path d="M2 23h20" stroke="#333"/></svg>
      <svg width="24" height="24" viewBox="0 0 24 24"><rect x="3" y="2" width="4" height="20" fill="#6eb5f0"/><rect x="8" y="9" width="4" height="13" fill="#eee"/><rect x="13" y="14" width="4" height="8" fill="#aaa"/><rect x="18" y="10" width="4" height="12" fill="#ddd"/></svg>
      <svg width="24" height="24" viewBox="0 0 24 24"><rect x="2" y="4" width="20" height="6" fill="#6eb5f0"/><rect x="2" y="4" width="5" height="6" fill="#eee"/><rect x="2" y="13" width="13" height="6" fill="#eee"/><rect x="15" y="13" width="7" height="6" fill="#aaa"/></svg>
      <svg width="24" height="24" viewBox="0 0 24 24"><rect x="6" y="2" width="6" height="12" fill="#2b96ee"/><rect x="6" y="16" width="6" height="6" fill="#eee"/><rect x="15" y="2" width="6" height="8" fill="#aaa"/><rect x="15" y="11" width="6" height="11" fill="#eee"/></svg>
      <!-- r2 -->
      <svg width="24" height="24" viewBox="0 0 24 24" fill="none"><path d="M2 17 9 9l4 4 5-6 5 6" stroke="#4a9ede" stroke-width="1.300"/><path d="M2 13 9 5l4 5 5-4 5 5" stroke="#555"/><path d="M1 22h22" stroke="#333"/></svg>
      <svg width="24" height="24" viewBox="0 0 24 24"><path d="M1 22 8 8l4 5 5-11 6 12v8z" fill="#aaa"/><path d="M1 22 8 7l5 8 3-3 7 10z" fill="#eee"/><path d="M1 22 5 15l5 3 4-2 9 6z" fill="#5ab0f0"/></svg>
      <svg width="24" height="24" viewBox="0 0 24 24"><path d="M1 4l7 6 6-4 9 6V3H1z" fill="#5ab0f0"/><path d="M1 8l7 7 6-5 9 6v6H1z" fill="#5ab0f0"/><path d="M1 14l7 6 6-4 9 6H1z" fill="#eee"/></svg>
      <svg width="24" height="24" viewBox="0 0 24 24"><rect x="1" y="3" width="22" height="19" fill="#5ab0f0"/><path d="M1 20l7-6 5 4 10-8v12H1z" fill="#eee"/></svg>
      <svg width="24" height="24" viewBox="0 0 24 24"><rect x="3" y="3" width="5" height="19" fill="#2b96ee"/><rect x="9" y="11" width="5" height="11" fill="#eee"/><rect x="15" y="3" width="5" height="19" fill="#aaa"/><path d="M1 18 8 8l5 5 9-8" fill="none" stroke="#444" stroke-width="1.300"/></svg>
      <svg width="24" height="24" viewBox="0 0 24 24"><rect x="3" y="13" width="5" height="9" fill="#2b96ee"/><rect x="9" y="4" width="5" height="18" fill="#5ab0f0"/><rect x="15" y="7" width="5" height="15" fill="#aaa"/><path d="M1 17 8 9l5 7 8-8" fill="none" stroke="#555" stroke-width="1.300"/></svg>
      <!-- r3 -->
      <svg width="24" height="24" viewBox="0 0 24 24"><path d="M1 2c6 4 6 5 11 5s5-1 11-5v4c-6 4-6 5-11 5S7 10 1 6z" fill="#999"/><path d="M1 7c6 3 5 8 11 8s5-5 11-8v4c-6 3-5 8-11 8S7 14 1 11z" fill="#2b8ee0"/><path d="M1 13c6 3 5 7 11 7s5-4 11-7v7H1z" fill="#e09a35"/></svg>
      <svg width="24" height="24" viewBox="0 0 24 24"><rect x="4" y="8" width="4" height="14" fill="#eee"/><rect x="9" y="12" width="4" height="4" fill="#5ab0f0"/><rect x="14" y="2" width="4" height="12" fill="#2b96ee"/><rect x="19" y="2" width="4" height="20" fill="#eee"/></svg>
      <svg width="24" height="24" viewBox="0 0 24 24"><rect x="1" y="2" width="22" height="6" fill="#5ab0f0"/><rect x="5" y="9" width="14" height="6" fill="#2b96ee"/><rect x="8" y="16" width="8" height="6" fill="#5ab0f0"/></svg>
      <svg width="24" height="24" viewBox="0 0 24 24"><path d="M2 2v20h20" fill="none" stroke="#333"/><rect x="5" y="5" width="4" height="4" fill="#eee"/><rect x="10" y="9" width="4" height="4" fill="#6eb5f0"/><rect x="6" y="14" width="3" height="3" fill="#bbb"/><rect x="16" y="15" width="4" height="4" fill="#6eb5f0"/></svg>
      <svg width="24" height="24" viewBox="0 0 24 24"><circle cx="12" cy="12" r="11" fill="#f2f2f2"/><path d="M12 12V1a11 11 0 0 1 6 20z" fill="#7cbcf0"/></svg>
      <svg width="24" height="24" viewBox="0 0 24 24" fill="none"><circle cx="12" cy="12" r="8.500" stroke="#5ab0f0" stroke-width="5"/><path d="M12 3.500a8.500 8.500 0 0 1 8 6" stroke="#aaa" stroke-width="5"/></svg>
      <!-- r4 -->
      <svg width="24" height="24" viewBox="0 0 24 24"><rect x="1" y="1" width="10" height="12" fill="#5ab0f0"/><rect x="1" y="14" width="10" height="9" fill="#5ab0f0"/><rect x="12" y="1" width="11" height="7" fill="#eee"/><rect x="12" y="9" width="5" height="14" fill="#eee"/><rect x="18" y="9" width="5" height="6" fill="#eee"/><rect x="18" y="16" width="5" height="7" fill="#eee"/></svg>
      <svg width="24" height="24" viewBox="0 0 24 24"><circle cx="12" cy="11" r="9" fill="#eee"/><circle cx="12" cy="11" r="7" fill="#2f9e5a"/><path d="M8 7h5l1 4-3 4-2-3z" fill="#eee"/><path d="M6 22h12" stroke="#555" stroke-width="2"/></svg>
      <svg width="24" height="24" viewBox="0 0 24 24"><path d="M1 3l6-2 2 4 6-3 8 3v9l-5 2-4-3-5 2-3-2-3-2z" fill="#aaa"/><path d="M3 3h6v6l-3 3-3-3z" fill="#5ab0f0"/><path d="M11 16l5-3 5 1-3 9-7-1z" fill="#5ab0f0"/></svg>
      <svg width="24" height="24" viewBox="0 0 24 24"><path d="M15 0 1 19l14 1z" fill="#4aa3e4"/><path d="M15 0l1 20 4 4z" fill="#1c6fb0"/></svg>
      <svg width="24" height="24" viewBox="0 0 24 24"><path d="M1 18a11 11 0 0 1 7-9v7z" fill="#eee"/><path d="M9 8.500a11 11 0 0 1 8 1l-4 6z" fill="#5ab0f0"/><path d="M18 10a11 11 0 0 1 5 8h-5z" fill="#5ab0f0"/></svg>
      <svg width="26" height="24" viewBox="0 0 26 24"><rect x="4" y="8" width="21" height="14" fill="#e8e8e8"/><text x="7" y="19" font-size="11" font-family="Open Sans" fill="#3a8fd8">123</text><path d="M7 0 1 9h3l-3 6 8-9H6l3-6z" fill="#f0a82c"/></svg>
      <!-- r5 -->
      <svg width="24" height="24" viewBox="0 0 24 24"><rect x="1" y="3" width="22" height="18" fill="#eee"/><path d="M9 6l3 6H6z" fill="#2f9e5a"/><path d="M12 6h7l-3.500 6z" fill="#d83a3a"/><path d="M3 15h18M3 18h18" stroke="#999"/></svg>
      <svg width="26" height="24" viewBox="0 0 26 24"><rect x="1" y="1" width="19" height="20" fill="#e8e8e8"/><rect x="1" y="1" width="19" height="4" fill="#999"/><rect x="4" y="9" width="5" height="4" fill="#555"/><rect x="4" y="15" width="5" height="4" fill="#555"/><path d="M10 11h15l-6 7v6l-3-2v-4z" fill="#e8e8e8" stroke="#121212"/></svg>
      <svg width="24" height="24" viewBox="0 0 24 24"><rect x="1" y="2" width="22" height="20" fill="#e8e8e8"/><path d="M1 6h22M1 12h22M1 17h22M8 6v16M16 6v16" stroke="#121212"/></svg>
      <svg width="24" height="24" viewBox="0 0 24 24"><rect x="1" y="2" width="22" height="20" fill="#e8e8e8"/><rect x="12" y="6" width="11" height="16" fill="#5ab0f0"/><rect x="1" y="12" width="11" height="5" fill="#5ab0f0"/><path d="M1 6h22M1 12h22M1 17h22M8 6v16M16 6v16" stroke="#121212"/></svg>
      <span class="text-[18px] font-semibold text-[#2b7cc4] leading-none font-['Liberation_Sans',sans-serif]">R</span>
      <span class="text-[20px] font-semibold text-[#2b7cc4] leading-none -mt-[3px]">Py</span>
      <!-- r6 -->
      <svg width="24" height="24" viewBox="0 0 24 24" fill="none"><path d="M1 22V1M1 22h22" stroke="#333"/><path d="M3 6h16" stroke="#2b8ee0" stroke-width="1.300"/><circle cx="20" cy="6" r="2.500" fill="#5ab0f0"/><path d="M3 11h13M3 16h9" stroke="#aaa"/></svg>
      <svg width="24" height="24" viewBox="0 0 24 24"><rect x="1" y="9" width="7" height="6" fill="#5ab0f0"/><rect x="14" y="1" width="9" height="6" fill="#5ab0f0"/><rect x="14" y="9" width="9" height="6" fill="#5ab0f0"/><rect x="14" y="17" width="9" height="6" fill="#5ab0f0"/><path d="M8 12h6M11 4v16h3M11 4h3" fill="none" stroke="#5ab0f0"/></svg>
      <svg width="24" height="24" viewBox="0 0 24 24"><path d="M4 1h11l6 6v16H4z" fill="#eee"/><path d="M15 1v6h6z" fill="#999"/><circle cx="4" cy="10" r="3" fill="#2b8ee0"/><path d="M9 10h8M9 14h9M9 18h5" stroke="#5ab0f0" stroke-width="1.300"/></svg>
      <svg width="24" height="24" viewBox="0 0 24 24"><path d="M6 1h12v8c0 5-3 7-6 7s-6-2-6-7z" fill="#eee"/><rect x="6" y="1" width="12" height="4" fill="#5ab0f0"/><path d="M6 3H2c0 4 1 7 4 8M18 3h4c0 4-1 7-4 8" fill="none" stroke="#555"/><rect x="10" y="16" width="4" height="4" fill="#eee"/><rect x="7" y="20" width="10" height="3" fill="#5ab0f0"/></svg>
      <svg width="24" height="24" viewBox="0 0 24 24" fill="none"><path d="M4 1h11l6 6v16H4z" stroke="#444"/><path d="M15 1v6h6" stroke="#444"/><rect x="7" y="14" width="3" height="6" fill="#444"/><rect x="11" y="11" width="3" height="9" fill="#444"/><rect x="15" y="15" width="3" height="5" fill="#444"/></svg>
      <svg width="26" height="26" viewBox="0 0 26 26"><rect x="4" y="2" width="9" height="9" fill="#999"/><rect x="14" y="2" width="9" height="9" fill="#eee"/><rect x="4" y="12" width="9" height="9" fill="#eee"/><path d="M11 13h15l-6 7v6l-3-2v-4z" fill="#eee" stroke="#121212"/><path d="M8 0 2 9h3l-3 6 8-9H7l3-6z" fill="#f0a82c"/></svg>
      <!-- r7 -->
      <svg width="26" height="26" viewBox="0 0 26 26"><path d="M4 6h14l3 3v12H4z" fill="#eee"/><path d="M7 20 12 9l3 7-3-2z" fill="#5ab0f0"/><path d="M11 13h15l-6 7v6l-3-2v-4z" fill="#eee" stroke="#121212"/><path d="M8 0 2 9h3l-3 6 8-9H7l3-6z" fill="#f0a82c"/></svg>
      <svg width="24" height="24" viewBox="0 0 24 24"><rect x="1" y="4" width="22" height="16" fill="#eee"/><path d="M1 18 8 11l5 4 3-2 7 5v2H1z" fill="#5ab0f0"/><circle cx="17" cy="8" r="2" fill="#e08a3a"/></svg>
      <svg width="26" height="26" viewBox="0 0 26 26" fill="none"><path d="M8 2h15v18h-5M3 14v9h13" stroke="#3a9ae0" stroke-width="3"/><path d="M5 0a5 5 0 0 1 5 5c0 3-3 6-5 10-2-4-5-7-5-10a5 5 0 0 1 5-5z" fill="#d87a20"/><circle cx="20" cy="16" r="2" fill="#d87a20"/><circle cx="21" cy="22" r="3" fill="#d87a20"/></svg>
      <svg width="24" height="24" viewBox="0 0 24 24"><path d="M12 1l11 11-11 11L1 12z" fill="#742774"/><path d="M12 4l4 4-4 4-4-4zM7 9l4 4-4 4-3-4zM17 9l3 3-4 5-4-4zM12 14l3 3-3 3-3-3z" fill="#eeddee"/></svg>
      <svg width="24" height="24" viewBox="0 0 24 24"><path d="M1 3h11l11 9-6 8H1l8-8z" fill="#5ab0f0"/><path d="M7 12 17 4h-5L4 11z" fill="#eee"/><path d="M9 12l8-1-6 7H4z" fill="#eee"/></svg>
      <svg width="24" height="24" viewBox="0 0 24 24" fill="#d8d8d8"><circle cx="6" cy="12" r="1.300"/><circle cx="12" cy="12" r="1.300"/><circle cx="18" cy="12" r="1.300"/></svg>
    </div>
    <div class="h-[44px] shrink-0 border-t border-dashed border-[#ddd] mx-[8px] w-[210px] flex items-center pl-[6px]">
      <svg width="26" height="26" viewBox="0 0 26 26"><path d="M4 6h14l3 3v12H4z" fill="#eee"/><rect x="7" y="13" width="5" height="4" fill="#777"/><path d="M11 13h15l-6 7v6l-3-2v-4z" fill="#eee" stroke="#121212"/><path d="M8 0 2 9h3l-3 6 8-9H7l3-6z" fill="#f0a82c"/></svg>
    </div>
    <div class="flex-1 border-t border-[#ddd] text-[14px] text-[#e8e8e8]">
      <div class="pl-[15px] pt-[10px] leading-[20px]">Values</div>
      <div class="ml-[6px] mt-[7px] w-[213px] h-[35px] border border-dashed border-[#666] flex items-center pl-[13px] text-white">Add data fields here</div>
      <div class="pl-[15px] mt-[14px] leading-[20px] font-semibold text-white">Drill through</div>
      <div class="pl-[15px] pr-[27px] mt-[11px] flex items-center justify-between h-[20px]"><span>Cross-report</span>
        <div class="w-[40px] h-[20px] rounded-full border border-[#aaa] flex items-center pl-[5px] text-[11px] text-[#999]"><span class="w-[10px] h-[10px] rounded-full bg-[#aaa] mr-[2px]"></span>Off</div>
      </div>
      <div class="pl-[15px] pr-[27px] mt-[13px] flex items-center justify-between h-[20px]"><span>Keep all filters</span>
        <div class="w-[40px] h-[20px] rounded-full bg-[#2bad96] flex items-center justify-end pr-[5px] text-[11px] text-[#124a40]">On<span class="w-[10px] h-[10px] rounded-full bg-[#123] ml-[3px]"></span></div>
      </div>
      <div class="ml-[6px] mt-[13px] w-[213px] h-[32px] border border-dashed border-[#666] bg-black flex items-center pl-[10px] text-white whitespace-nowrap">Add drill-through fields here</div>
    </div>
  </div>

  <!-- data pane -->
  <div class="flex-1 flex flex-col">
    <div class="h-[50px] shrink-0 flex items-center justify-between pl-[10px] pr-[11px]">
      <span class="text-[18.5px] font-semibold text-white">Data</span>
      <svg width="12" height="12" viewBox="0 0 12 12" fill="none" stroke="#e6e6e6" stroke-width="1.800"><path d="m1 1 5 5-5 5M6 1l5 5-5 5"/></svg>
    </div>
    <div class="ml-[5px] mt-[7px] w-[215px] h-[30px] shrink-0 rounded-[4px] border border-[#777] flex items-center pl-[13px] text-[16px] text-[#8a8a8a]">
      <svg width="20" height="20" viewBox="0 0 20 20" fill="none" stroke="#bbb" stroke-width="1.300"><circle cx="9" cy="9" r="7.500"/><path d="m14 14 5 5"/></svg>
      <span class="ml-[9px]">Search</span>
    </div>
    <div class="mt-[14px] flex items-center h-[24px] pl-[20px] text-[14px] text-[#e6e6e6]">
      <svg width="8" height="12" viewBox="0 0 8 12" fill="none" stroke="#ccc" stroke-width="1.300"><path d="m1 1 5 5-5 5"/></svg>
      <svg class="ml-[8px]" width="18" height="18" viewBox="0 0 18 18" fill="none" stroke="#d0d0d0"><path d="M11 1H1v14h8M1 5h10M1 10h8M5 5v10"/><rect x="10" y="5" width="7" height="12" fill="#e8e8e8" stroke="none"/><path d="M11 9h5M11 12h5M11 15h5M13.500 9v7" stroke="#121212"/></svg>
      <span class="ml-[6px]">Num of projacts</span>
      <svg class="ml-[17px]" width="14" height="12" viewBox="0 0 14 12" fill="none" stroke="#b84a5a" stroke-width="1.200"><path d="M7 1 1 11h12zM7 4.500v3.500M7 9v1"/></svg>
    </div>
    <div class="mt-[6px] flex items-center h-[24px] pl-[20px] text-[14px] text-[#e6e6e6]">
      <svg width="8" height="12" viewBox="0 0 8 12" fill="none" stroke="#ccc" stroke-width="1.300"><path d="m1 1 5 5-5 5"/></svg>
      <svg class="ml-[8px]" width="16" height="16" viewBox="0 0 16 16" fill="none" stroke="#d0d0d0"><rect x="1" y="1" width="14" height="14" rx="2.500"/><path d="M1 5h14M1 11h14M5.500 1v14M10.500 1v14"/></svg>
      <span class="ml-[8px]">project</span>
    </div>
  </div>
</div>

<!-- status bar -->
<div class="h-[21px] shrink-0 border-t border-[#666] flex items-center text-[14px] text-[#cfcfcf] pl-[5px] relative">
  <span class="mt-[6px]">Page 1 of 2</span>
  <div class="absolute left-[1655px] top-0 h-full flex items-center">
    <span class="w-[12px] text-[16px] mt-[4px]">-</span>
    <div class="w-[125px] h-[1px] bg-[#ccc] relative mt-[6px]">
      <div class="absolute left-[48px] -top-[6px] w-[5px] h-[13px] bg-[#ddd]"></div>
      <div class="absolute left-[62px] -top-[3px] w-[1px] h-[7px] bg-[#ccc]"></div>
    </div>
    <span class="ml-[6px] text-[18px] mt-[4px]">+</span>
    <span class="ml-[15px] mt-[6px]">80%</span>
    <svg class="ml-[22px] mt-[6px]" width="18" height="14" viewBox="0 0 18 14" fill="none" stroke="#ccc" stroke-width="1.300"><rect x="1" y="1" width="16" height="12" rx="2"/><path d="M5 5v-1h2M13 5v-1h-2M5 9v1h2M13 9v1h-2" stroke-width="1.600"/></svg>
  </div>
</div>

<!-- watermark -->
<div class="absolute left-[840px] top-[900px] w-[240px] flex flex-col items-center text-[#cfcfcf]/85 pointer-events-none">
  <div class="text-[72px] leading-[62px] font-bold font-['DejaVu_Sans',sans-serif]" dir="rtl">نفذلي</div>
  <div class="self-start ml-[32px] mt-[0px] flex gap-[2px]"><span class="w-[13px] h-[13px] rounded-full bg-[#cfcfcf]/85"></span><span class="w-[13px] h-[13px] rounded-full bg-[#cfcfcf]/85"></span></div>
  <div class="text-[36px] leading-[32px] font-['Roboto',sans-serif]">nafezly.com</div>
</div>

</body>
</html>
